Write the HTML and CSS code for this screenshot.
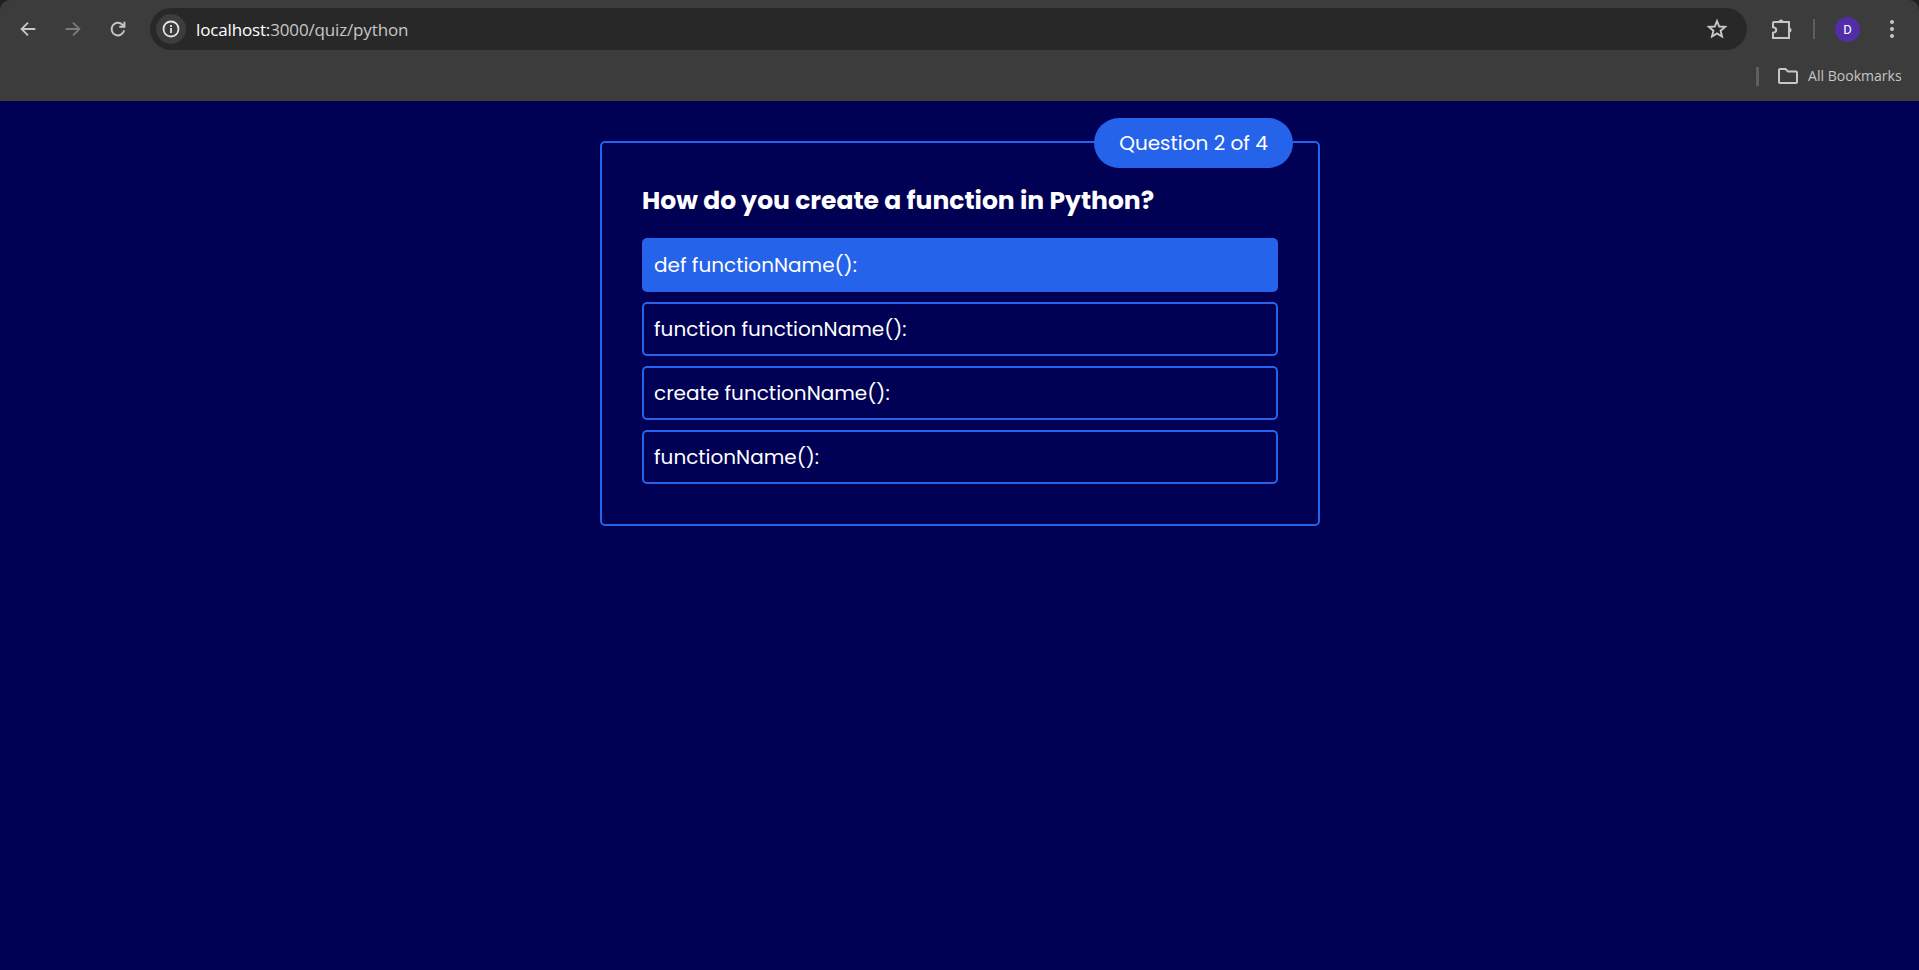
FILE: index.html
```html
<!DOCTYPE html>
<html lang="en">
<head>
<meta charset="utf-8">
<title>Python Quiz</title>
<link rel="stylesheet" href="styles.css">
</head>
<body>
<header class="browser">
  <div class="toolbar">
    <svg class="icon back" viewBox="0 0 24 24"><path d="M20 12H5.500M12 5l-7 7 7 7"/></svg>
    <svg class="icon forward" viewBox="0 0 24 24"><path d="M4 12h14.500M12 5l7 7-7 7"/></svg>
    <svg class="icon reload" viewBox="0 0 24 24"><path d="M18.700 13.500a6.900 6.900 0 1 1-1.900-6.300L19 9.300M19 4v5.600h-5.600"/></svg>
    <div class="address">
      <span class="info"><svg class="info-icon" viewBox="0 0 20 20"><circle cx="10" cy="10" r="7.500"/><path d="M10 9v5M10 6v2"/></svg></span>
      <span class="url"><span class="host">localhost:</span>3000/quiz/python</span>
      <svg class="star" viewBox="0 0 24 24"><path d="M12 4l2.200 5.500 5.900.4-4.500 3.800 1.400 5.800-5-3.100-5 3.100 1.400-5.800-4.500-3.800 5.900-.4z"/></svg>
    </div>
    <svg class="puzzle" viewBox="0 0 24 24"><path d="M5 5h15v16H4v-5.200c4.300-.6 4.300-5 0-5.600V6a1 1 0 0 1 1-1z"/><path class="solid" d="M9.500 5a2.500 2.500 0 0 1 5 0zM20 10.500a2.500 2.500 0 0 1 0 5z"/></svg>
    <span class="divider"></span>
    <span class="avatar">D</span>
    <svg class="menu" viewBox="0 0 6 20"><circle cx="3" cy="3" r="2"/><circle cx="3" cy="10" r="2"/><circle cx="3" cy="17" r="2"/></svg>
  </div>
  <div class="bookmarks">
    <span class="bookmark-divider"></span>
    <svg class="folder" viewBox="0 0 22 18"><path d="M3 2h5.500l2.500 2.500h8q1 0 1 1V15q0 1-1 1H3q-1 0-1-1V3q0-1 1-1z"/></svg>
    <span class="bookmark-label">All Bookmarks</span>
  </div>
</header>
<main class="page">
  <section class="card">
    <div class="badge"><span class="badge-text">Question 2 of 4</span></div>
    <h1 class="question">How do you create a function in Python?</h1>
    <ul class="options">
      <li class="option selected">def functionName():</li>
      <li class="option">function functionName():</li>
      <li class="option">create functionName():</li>
      <li class="option">functionName():</li>
    </ul>
  </section>
</main>
</body>
</html>
```
FILE: styles.css
```css
* { box-sizing: border-box; }
body {
  margin: 0;
  min-height: 970px;
  background: #000055;
  color: #fff;
  font-family: Poppins, Inter, sans-serif;
}
.browser {
  height: 101px;
  background: #3c3c3c;
  border-radius: 10px 10px 0 0;
  box-shadow: 0 -10px 0 10px #202124;
  clip-path: inset(0);
  font-family: "Open Sans", sans-serif;
}
.toolbar {
  display: flex;
  align-items: center;
  height: 58px;
  padding: 0 17px;
}
.icon { width: 22px; height: 22px; fill: none; stroke: #c7c7c7; stroke-width: 2; flex: none; }
.forward { margin-left: 23px; stroke: #7b7b7b; }
.reload { margin-left: 23px; stroke-width: 2.100; }
.address {
  display: flex;
  align-items: center;
  flex: none;
  width: 1597px;
  height: 42px;
  margin-left: 20px;
  padding: 0 18px 0 6px;
  border-radius: 21px;
  background: #282828;
}
.address { margin-left: 21px; }
.info {
  display: flex;
  align-items: center;
  justify-content: center;
  width: 30px;
  height: 30px;
  border-radius: 50%;
  background: #3c3c3c;
}
.info-icon { width: 20px; height: 20px; fill: none; stroke: #e3e3e3; stroke-width: 1.800; }
.url { flex: 1; margin-left: 10px; padding-top: 1px; font-size: 17px; line-height: 24px; letter-spacing: -0.150px; color: #c7c7c7; }
.host { color: #fff; }
.star { width: 24px; height: 24px; fill: none; stroke: #c7c7c7; stroke-width: 1.900; }
.puzzle { width: 24px; height: 24px; margin-left: 22px; fill: none; stroke: #c7c7c7; stroke-width: 2; }
.solid { fill: #c7c7c7; stroke: none; }
.divider { width: 2px; height: 20px; margin-left: 20px; background: #5e5e5e; }
.avatar {
  width: 25px;
  height: 25px;
  margin-left: 20px;
  border-radius: 50%;
  background: #512da8;
  color: #fff;
  font: 13px/25px Roboto, sans-serif;
  text-align: center;
}
.menu { width: 6px; height: 20px; margin-left: 29px; fill: #c7c7c7; }
.bookmarks {
  display: flex;
  align-items: center;
  justify-content: flex-end;
  height: 36px;
  padding-right: 16px;
}
.bookmark-divider { width: 3px; height: 19px; background: #5e5e5e; }
.folder { width: 22px; height: 18px; margin: 0 9px 0 18px; fill: none; stroke: #c7c7c7; stroke-width: 2; }
.bookmark-label { width: 95px; font-size: 14px; line-height: 20px; letter-spacing: 0.030px; color: #c7c7c7; white-space: nowrap; }
.page { padding: 40px 0 0 600px; }
.card {
  position: relative;
  width: 720px;
  padding: 40px;
  border: 2px solid #2563eb;
  border-radius: 5px;
}
.badge {
  position: absolute;
  top: -25px;
  right: 25px;
  display: flex;
  align-items: center;
  justify-content: center;
  width: 199px;
  height: 50px;
  border-radius: 25px;
  background: #2563eb;
  font-size: 20px;
}
.question { margin: 0 0 19px; font-size: 25px; line-height: 36px; font-weight: 700; white-space: nowrap; }
.options { display: flex; flex-direction: column; gap: 10px; margin: 0; padding: 0; list-style: none; }
.option {
  height: 54px;
  padding: 0 10px;
  border: 2px solid #2563eb;
  border-radius: 5px;
  font-size: 20px;
  line-height: 50px;
}
.selected { background: #2563eb; }
```
